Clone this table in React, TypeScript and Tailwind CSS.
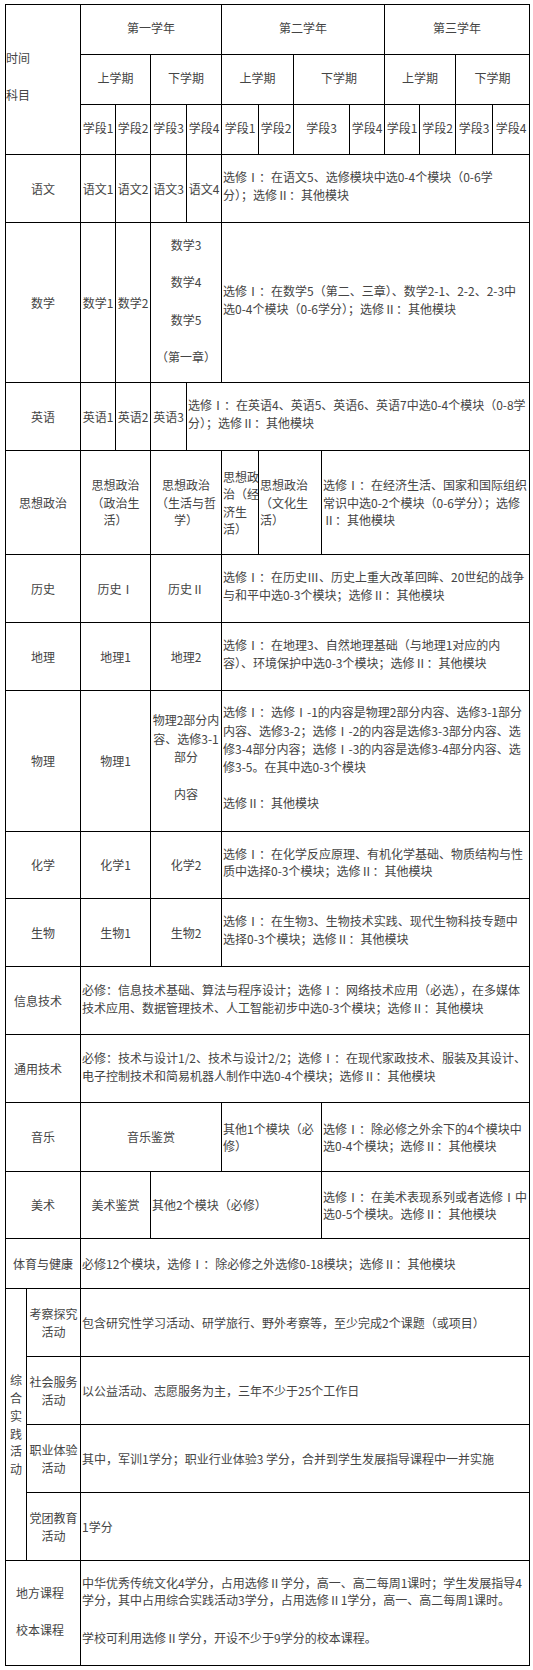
import React from "react";

type P = { c: string; children?: React.ReactNode };

const C = ({ c, children }: P) => (
  <div
    className={`bg-white flex flex-col items-center justify-center text-center leading-[17.5px] whitespace-nowrap overflow-hidden ${c}`}
  >
    {children}
  </div>
);

const T = ({ c, children }: P) => (
  <div
    className={`bg-white flex flex-col items-start justify-center text-left leading-[17.5px] whitespace-nowrap overflow-hidden pl-[1px] ${c}`}
  >
    {children}
  </div>
);

export default function App() {
  return (
    <div className="w-[533px] min-h-[1670px] bg-white pt-[4px] pl-[5px] font-['Noto_Sans_CJK_SC','Noto_Sans',sans-serif] text-[12px] text-[#444]">
      <div className="grid w-[525px] grid-cols-[20px_53px_34px_34px_35px_34px_36px_34px_27px_27px_34px_34px_35px_36px_36px] grid-rows-[49px_49px_49px_67px_159px_67px_103px_67px_67px_140px_66px_67px_67px_67px_68px_66px_49px_67px_67px_67px_67px_104px] gap-px border border-black bg-black">
        {/* Header */}
        <div className="col-start-1 col-end-3 row-start-1 row-end-4 bg-white flex flex-col justify-center items-start gap-[20px] pb-[8px] leading-[17px]">
          <div>时间</div>
          <div>科目</div>
        </div>
        <C c="col-start-3 col-end-7 row-start-1 row-end-2 pb-[4px]">第一学年</C>
        <C c="col-start-7 col-end-12 row-start-1 row-end-2 pb-[4px]">第二学年</C>
        <C c="col-start-12 col-end-16 row-start-1 row-end-2 pb-[4px]">第三学年</C>

        <C c="col-start-3 col-end-5 row-start-2 row-end-3 pb-[4px]">上学期</C>
        <C c="col-start-5 col-end-7 row-start-2 row-end-3 pb-[4px]">下学期</C>
        <C c="col-start-7 col-end-9 row-start-2 row-end-3 pb-[4px]">上学期</C>
        <C c="col-start-9 col-end-12 row-start-2 row-end-3 pb-[4px]">下学期</C>
        <C c="col-start-12 col-end-14 row-start-2 row-end-3 pb-[4px]">上学期</C>
        <C c="col-start-14 col-end-16 row-start-2 row-end-3 pb-[4px]">下学期</C>

        <C c="col-start-3 col-end-4 row-start-3 row-end-4 pb-[4px]">学段1</C>
        <C c="col-start-4 col-end-5 row-start-3 row-end-4 pb-[4px]">学段2</C>
        <C c="col-start-5 col-end-6 row-start-3 row-end-4 pb-[4px]">学段3</C>
        <C c="col-start-6 col-end-7 row-start-3 row-end-4 pb-[4px]">学段4</C>
        <C c="col-start-7 col-end-8 row-start-3 row-end-4 pb-[4px]">学段1</C>
        <C c="col-start-8 col-end-9 row-start-3 row-end-4 pb-[4px]">学段2</C>
        <C c="col-start-9 col-end-11 row-start-3 row-end-4 pb-[4px]">学段3</C>
        <C c="col-start-11 col-end-12 row-start-3 row-end-4 pb-[4px]">学段4</C>
        <C c="col-start-12 col-end-13 row-start-3 row-end-4 pb-[4px]">学段1</C>
        <C c="col-start-13 col-end-14 row-start-3 row-end-4 pb-[4px]">学段2</C>
        <C c="col-start-14 col-end-15 row-start-3 row-end-4 pb-[4px]">学段3</C>
        <C c="col-start-15 col-end-16 row-start-3 row-end-4 pb-[4px]">学段4</C>

        {/* 语文 */}
        <C c="col-start-1 col-end-3 row-start-4 row-end-5">语文</C>
        <C c="col-start-3 col-end-4 row-start-4 row-end-5">语文1</C>
        <C c="col-start-4 col-end-5 row-start-4 row-end-5">语文2</C>
        <C c="col-start-5 col-end-6 row-start-4 row-end-5">语文3</C>
        <C c="col-start-6 col-end-7 row-start-4 row-end-5">语文4</C>
        <T c="col-start-7 col-end-16 row-start-4 row-end-5 pb-[6px]">
          <div>选修Ⅰ：在语文5、选修模块中选0-4个模块（0-6学</div>
          <div>分）；选修Ⅱ：其他模块</div>
        </T>

        {/* 数学 */}
        <C c="col-start-1 col-end-3 row-start-5 row-end-6">数学</C>
        <C c="col-start-3 col-end-4 row-start-5 row-end-6">数学1</C>
        <C c="col-start-4 col-end-5 row-start-5 row-end-6">数学2</C>
        <C c="col-start-5 col-end-7 row-start-5 row-end-6 gap-[20px] pb-[4px]">
          <div>数学3</div>
          <div>数学4</div>
          <div>数学5</div>
          <div>（第一章）</div>
        </C>
        <T c="col-start-7 col-end-16 row-start-5 row-end-6 pb-[6px]">
          <div>选修Ⅰ：在数学5（第二、三章）、数学2-1、2-2、2-3中</div>
          <div>选0-4个模块（0-6学分）；选修Ⅱ：其他模块</div>
        </T>

        {/* 英语 */}
        <C c="col-start-1 col-end-3 row-start-6 row-end-7">英语</C>
        <C c="col-start-3 col-end-4 row-start-6 row-end-7">英语1</C>
        <C c="col-start-4 col-end-5 row-start-6 row-end-7">英语2</C>
        <C c="col-start-5 col-end-6 row-start-6 row-end-7">英语3</C>
        <T c="col-start-6 col-end-16 row-start-6 row-end-7 pb-[6px]">
          <div>选修Ⅰ：在英语4、英语5、英语6、英语7中选0-4个模块（0-8学</div>
          <div>分）；选修Ⅱ：其他模块</div>
        </T>

        {/* 思想政治 */}
        <C c="col-start-1 col-end-3 row-start-7 row-end-8">思想政治</C>
        <C c="col-start-3 col-end-5 row-start-7 row-end-8">
          <div>思想政治</div>
          <div>（政治生</div>
          <div>活）</div>
        </C>
        <C c="col-start-5 col-end-7 row-start-7 row-end-8">
          <div>思想政治</div>
          <div>（生活与哲</div>
          <div>学）</div>
        </C>
        <T c="col-start-7 col-end-8 row-start-7 row-end-8 pl-0">
          <div>思想政</div>
          <div>治（经</div>
          <div>济生</div>
          <div>活）</div>
        </T>
        <T c="col-start-8 col-end-10 row-start-7 row-end-8">
          <div>思想政治</div>
          <div>（文化生</div>
          <div>活）</div>
        </T>
        <T c="col-start-10 col-end-16 row-start-7 row-end-8">
          <div>选修Ⅰ：在经济生活、国家和国际组织</div>
          <div>常识中选0-2个模块（0-6学分）；选修</div>
          <div>Ⅱ：其他模块</div>
        </T>

        {/* 历史 */}
        <C c="col-start-1 col-end-3 row-start-8 row-end-9">历史</C>
        <C c="col-start-3 col-end-5 row-start-8 row-end-9">历史Ⅰ</C>
        <C c="col-start-5 col-end-7 row-start-8 row-end-9">历史Ⅱ</C>
        <T c="col-start-7 col-end-16 row-start-8 row-end-9 pb-[6px]">
          <div>选修Ⅰ：在历史Ⅲ、历史上重大改革回眸、20世纪的战争</div>
          <div>与和平中选0-3个模块；选修Ⅱ：其他模块</div>
        </T>

        {/* 地理 */}
        <C c="col-start-1 col-end-3 row-start-9 row-end-10">地理</C>
        <C c="col-start-3 col-end-5 row-start-9 row-end-10">地理1</C>
        <C c="col-start-5 col-end-7 row-start-9 row-end-10">地理2</C>
        <T c="col-start-7 col-end-16 row-start-9 row-end-10 pb-[6px]">
          <div>选修Ⅰ：在地理3、自然地理基础（与地理1对应的内</div>
          <div>容）、环境保护中选0-3个模块；选修Ⅱ：其他模块</div>
        </T>

        {/* 物理 */}
        <C c="col-start-1 col-end-3 row-start-10 row-end-11">物理</C>
        <C c="col-start-3 col-end-5 row-start-10 row-end-11">物理1</C>
        <C c="col-start-5 col-end-7 row-start-10 row-end-11 pb-[8px]">
          <div className="leading-[18.5px]">物理2部分内</div>
          <div className="leading-[18.5px]">容、选修3-1</div>
          <div className="leading-[18.5px]">部分</div>
          <div className="mt-[18px] leading-[18.5px]">内容</div>
        </C>
        <T c="col-start-7 col-end-16 row-start-10 row-end-11 pb-[6px]">
          <div className="leading-[18.3px]">选修Ⅰ：选修Ⅰ-1的内容是物理2部分内容、选修3-1部分</div>
          <div className="leading-[18.3px]">内容、选修3-2；选修Ⅰ-2的内容是选修3-3部分内容、选</div>
          <div className="leading-[18.3px]">修3-4部分内容；选修Ⅰ-3的内容是选修3-4部分内容、选</div>
          <div className="leading-[18.3px]">修3-5。在其中选0-3个模块</div>
          <div className="mt-[18px] leading-[18.3px]">选修Ⅱ：其他模块</div>
        </T>

        {/* 化学 */}
        <C c="col-start-1 col-end-3 row-start-11 row-end-12">化学</C>
        <C c="col-start-3 col-end-5 row-start-11 row-end-12">化学1</C>
        <C c="col-start-5 col-end-7 row-start-11 row-end-12">化学2</C>
        <T c="col-start-7 col-end-16 row-start-11 row-end-12 pb-[6px]">
          <div>选修Ⅰ：在化学反应原理、有机化学基础、物质结构与性</div>
          <div>质中选择0-3个模块；选修Ⅱ：其他模块</div>
        </T>

        {/* 生物 */}
        <C c="col-start-1 col-end-3 row-start-12 row-end-13">生物</C>
        <C c="col-start-3 col-end-5 row-start-12 row-end-13">生物1</C>
        <C c="col-start-5 col-end-7 row-start-12 row-end-13">生物2</C>
        <T c="col-start-7 col-end-16 row-start-12 row-end-13 pb-[6px]">
          <div>选修Ⅰ：在生物3、生物技术实践、现代生物科技专题中</div>
          <div>选择0-3个模块；选修Ⅱ：其他模块</div>
        </T>

        {/* 信息技术 */}
        <C c="col-start-1 col-end-3 row-start-13 row-end-14 pr-[10px]">信息技术</C>
        <T c="col-start-3 col-end-16 row-start-13 row-end-14 pb-[4px]">
          <div>必修：信息技术基础、算法与程序设计；选修Ⅰ：网络技术应用（必选），在多媒体</div>
          <div>技术应用、数据管理技术、人工智能初步中选0-3个模块；选修Ⅱ：其他模块</div>
        </T>

        {/* 通用技术 */}
        <C c="col-start-1 col-end-3 row-start-14 row-end-15 pr-[10px]">通用技术</C>
        <T c="col-start-3 col-end-16 row-start-14 row-end-15 pb-[4px]">
          <div>必修：技术与设计1/2、技术与设计2/2；选修Ⅰ：在现代家政技术、服装及其设计、</div>
          <div>电子控制技术和简易机器人制作中选0-4个模块；选修Ⅱ：其他模块</div>
        </T>

        {/* 音乐 */}
        <C c="col-start-1 col-end-3 row-start-15 row-end-16">音乐</C>
        <C c="col-start-3 col-end-7 row-start-15 row-end-16">音乐鉴赏</C>
        <T c="col-start-7 col-end-10 row-start-15 row-end-16 pl-0">
          <div>其他1个模块（必</div>
          <div>修）</div>
        </T>
        <T c="col-start-10 col-end-16 row-start-15 row-end-16">
          <div>选修Ⅰ：除必修之外余下的4个模块中</div>
          <div>选0-4个模块；选修Ⅱ：其他模块</div>
        </T>

        {/* 美术 */}
        <C c="col-start-1 col-end-3 row-start-16 row-end-17">美术</C>
        <C c="col-start-3 col-end-5 row-start-16 row-end-17">美术鉴赏</C>
        <T c="col-start-5 col-end-10 row-start-16 row-end-17 pl-0">
          <div>其他2个模块（必修）</div>
        </T>
        <T c="col-start-10 col-end-16 row-start-16 row-end-17">
          <div>选修Ⅰ：在美术表现系列或者选修Ⅰ中</div>
          <div>选0-5个模块。选修Ⅱ：其他模块</div>
        </T>

        {/* 体育与健康 */}
        <C c="col-start-1 col-end-3 row-start-17 row-end-18">体育与健康</C>
        <T c="col-start-3 col-end-16 row-start-17 row-end-18">
          <div>必修12个模块，选修Ⅰ：除必修之外选修0-18模块；选修Ⅱ：其他模块</div>
        </T>

        {/* 综合实践活动 */}
        <C c="col-start-1 col-end-2 row-start-18 row-end-22 leading-[17.7px]">
          <div>综</div>
          <div>合</div>
          <div>实</div>
          <div>践</div>
          <div>活</div>
          <div>动</div>
        </C>
        <C c="col-start-2 col-end-3 row-start-18 row-end-19">
          <div>考察探究</div>
          <div>活动</div>
        </C>
        <T c="col-start-3 col-end-16 row-start-18 row-end-19">
          <div>包含研究性学习活动、研学旅行、野外考察等，至少完成2个课题（或项目）</div>
        </T>
        <C c="col-start-2 col-end-3 row-start-19 row-end-20">
          <div>社会服务</div>
          <div>活动</div>
        </C>
        <T c="col-start-3 col-end-16 row-start-19 row-end-20">
          <div>以公益活动、志愿服务为主，三年不少于25个工作日</div>
        </T>
        <C c="col-start-2 col-end-3 row-start-20 row-end-21">
          <div>职业体验</div>
          <div>活动</div>
        </C>
        <T c="col-start-3 col-end-16 row-start-20 row-end-21">
          <div>其中，军训1学分；职业行业体验3 学分，合并到学生发展指导课程中一并实施</div>
        </T>
        <C c="col-start-2 col-end-3 row-start-21 row-end-22">
          <div>党团教育</div>
          <div>活动</div>
        </C>
        <T c="col-start-3 col-end-16 row-start-21 row-end-22">
          <div>1学分</div>
        </T>

        {/* 地方课程 / 校本课程 */}
        <C c="col-start-1 col-end-3 row-start-22 row-end-23 gap-[20px] pr-[6px] pb-[4px]">
          <div>地方课程</div>
          <div>校本课程</div>
        </C>
        <T c="col-start-3 col-end-16 row-start-22 row-end-23 pb-[6px]">
          <div>中华优秀传统文化4学分，占用选修Ⅱ学分，高一、高二每周1课时；学生发展指导4</div>
          <div>学分，其中占用综合实践活动3学分，占用选修Ⅱ1学分，高一、高二每周1课时。</div>
          <div className="mt-[20px]">学校可利用选修Ⅱ学分，开设不少于9学分的校本课程。</div>
        </T>
      </div>
    </div>
  );
}
